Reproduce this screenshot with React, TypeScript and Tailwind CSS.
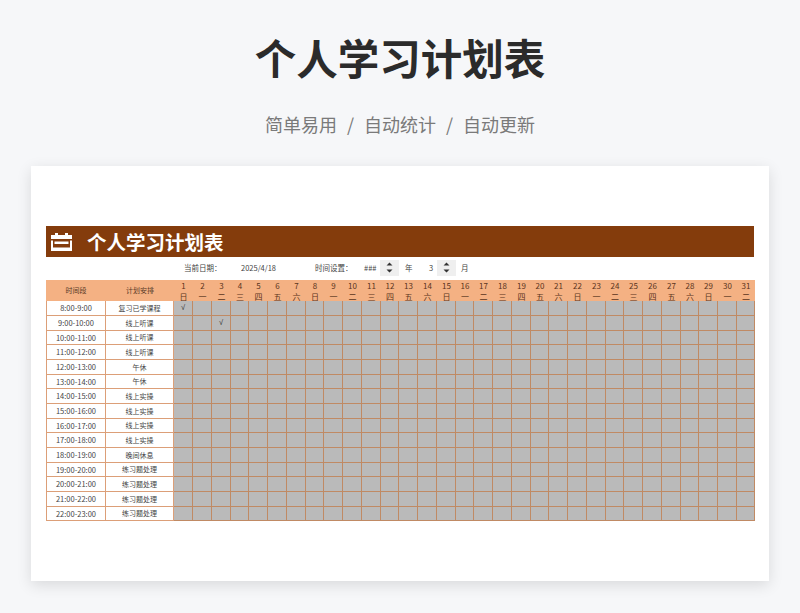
const wk = ["日","一","二","三","四","五","六"];
const days = Array.from({ length: 31 }, (_, i) => ({ n: i + 1, w: wk[i % 7] }));
const rows: [string, string][] = [
  ["8:00-9:00","复习已学课程"],["9:00-10:00","线上听课"],["10:00-11:00","线上听课"],["11:00-12:00","线上听课"],
  ["12:00-13:00","午休"],["13:00-14:00","午休"],["14:00-15:00","线上实操"],["15:00-16:00","线上实操"],
  ["16:00-17:00","线上实操"],["17:00-18:00","线上实操"],["18:00-19:00","晚间休息"],["19:00-20:00","练习题处理"],
  ["20:00-21:00","练习题处理"],["21:00-22:00","练习题处理"],["22:00-23:00","练习题处理"],
];
const checks: Record<string, boolean> = { "0-0": true, "1-2": true };

function Spin() {
  return (
    <div className="w-[19px] h-[16px] bg-[#efefef] flex items-center justify-center">
      <svg width="7" height="11" viewBox="0 0 7 11"><path d="M3.5 0.5L6.5 3.5H0.5Z M3.5 10.5L0.5 7.5H6.5Z" fill="#333" /></svg>
    </div>
  );
}

export default function App() {
  return (
    <div className="w-[800px] h-[613px] overflow-hidden bg-[#f6f7f9] flex flex-col items-center font-['Noto_Sans_CJK_SC','Noto_Sans',sans-serif]">
      <h1 className="mt-[27px] h-[60px] leading-[60px] text-[41.5px] font-bold text-[#2b2b2b]">个人学习计划表</h1>
      <div className="mt-[23px] h-[28px] leading-[28px] text-[18px] text-[#7a7a7a] flex">
        <span>简单易用</span><span className="mx-[10px]">/</span><span>自动统计</span><span className="mx-[10px]">/</span><span>自动更新</span>
      </div>
      <div className="mt-[28px] w-[738px] h-[415px] bg-white shadow-[0_4px_14px_rgba(0,0,0,0.12)] px-[15px] pt-[60px]">
        <div className="h-[31px] bg-[#843c0c] flex items-center pl-[5px]">
          <svg width="21" height="18" viewBox="0 0 21 18" fill="#fff">
            <rect x="4" y="0" width="3" height="3" /><rect x="14" y="0" width="3" height="3" />
            <rect x="0" y="2" width="21" height="4" /><rect x="3.5" y="8.5" width="14" height="2.5" />
            <rect x="0" y="7.5" width="2" height="10.5" /><rect x="19" y="7.5" width="2" height="10.5" />
            <rect x="0" y="14.5" width="21" height="3.5" />
          </svg>
          <span className="ml-[15px] text-[19.5px] font-bold text-white leading-none">个人学习计划表</span>
        </div>
        <div className="h-[23px] pb-[2px] flex items-center text-[7.5px] text-[#444444] pl-[138px]">
          <span className="w-[57px]">当前日期：</span>
          <span className="w-[74px]">2025/4/18</span>
          <span className="w-[49px]">时间设置：</span>
          <span className="w-[16px]">###</span>
          <Spin />
          <span className="ml-[6px] w-[20px]">年</span>
          <span className="w-[12px] text-center">3</span>
          <Spin />
          <span className="ml-[5px]">月</span>
        </div>
        <div className="grid grid-cols-[60px_68px_repeat(7,19px_19px_19px_18px)_19px_19px_18px] grid-rows-[21px_repeat(5,15px_15px_14px)] text-[7.5px] text-[#444444]">
          <div className="bg-[#f4b183] flex items-center justify-center text-[7px] text-[#5a3a28]">时间段</div>
          <div className="bg-[#f4b183] flex items-center justify-center text-[7px] text-[#5a3a28]">计划安排</div>
          {days.map((d) => (
            <div key={d.n} className="bg-[#f4b183] flex flex-col items-center justify-center text-[8px] leading-[11px] text-[#5a3420]">
              <span>{d.n}</span><span>{d.w}</span>
            </div>
          ))}
          {rows.map(([t, p], r) => [
            <div key={`t${r}`} className="bg-white border-l border-r border-b border-[#dc9f78] flex items-center justify-center whitespace-nowrap">{t}</div>,
            <div key={`p${r}`} className="bg-white border-r border-b border-[#dc9f78] text-[7px] flex items-center justify-center whitespace-nowrap">{p}</div>,
            ...days.map((d, c) => (
              <div key={`${r}-${c}`} className="bg-[#bababa] border-r border-b border-[#c08a64] flex items-center justify-center text-[#333333] font-['Liberation_Sans',sans-serif]">
                {checks[`${r}-${c}`] ? "√" : ""}
              </div>
            )),
          ])}
        </div>
      </div>
    </div>
  );
}
